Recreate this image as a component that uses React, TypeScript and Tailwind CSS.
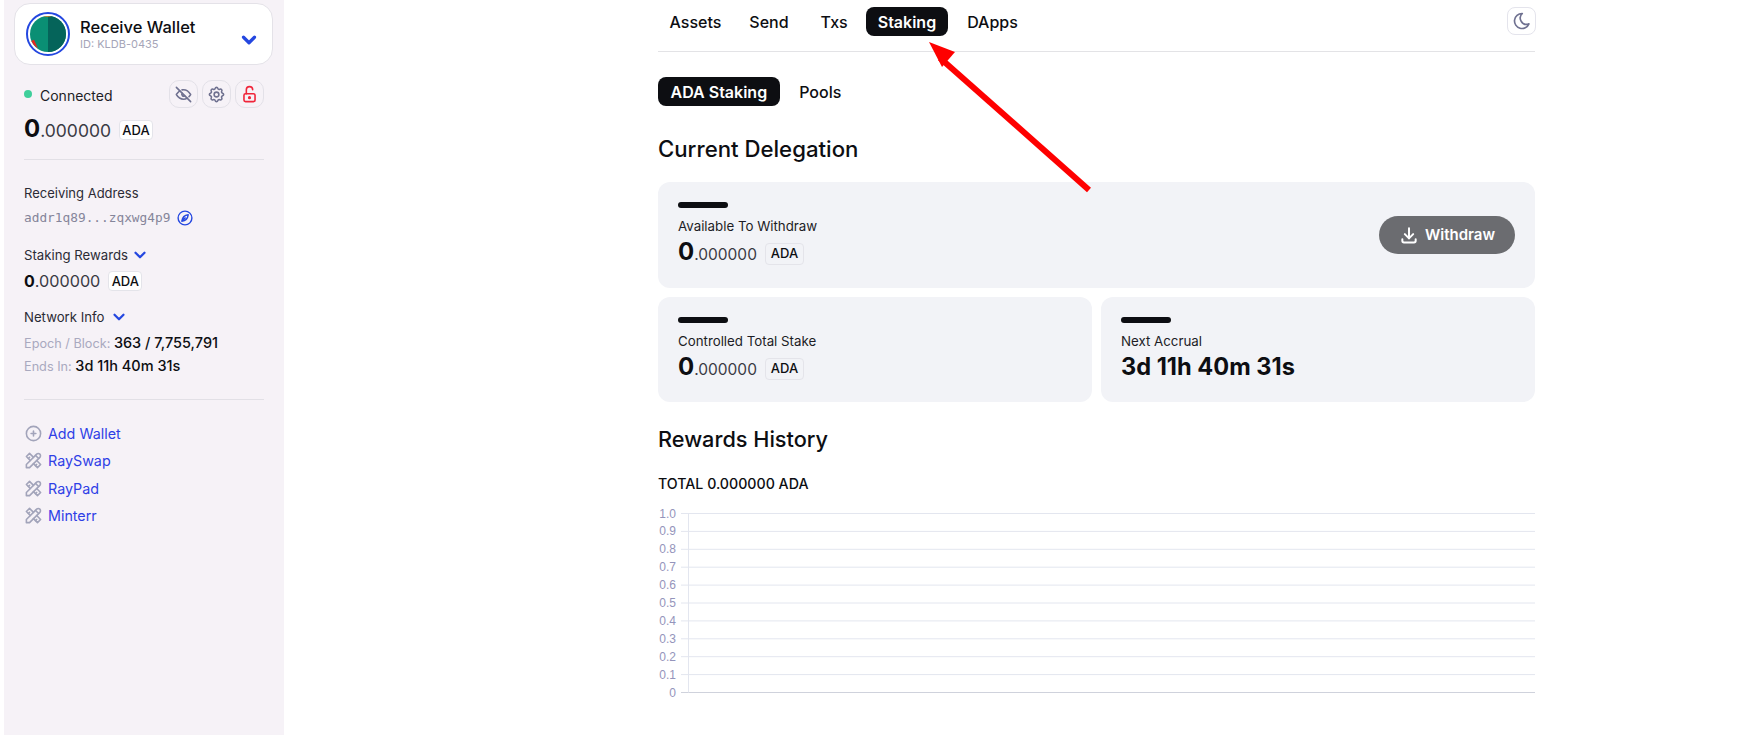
import React from 'react';
import { TbChevronDown, TbCirclePlus, TbDownload, TbEyeOff, TbLockOpen, TbMoon, TbSettings, TbTools } from 'react-icons/tb';

const fontStack = { fontFamily: 'Inter, "Noto Sans", sans-serif' };

const Badge: React.FC<{ muted?: boolean; small?: boolean }> = ({ muted, small }) => (
  <span
    className={`inline-flex items-center justify-center rounded-[4px] border border-[#e4e4ea] text-[13px] font-medium leading-none text-[#0d0e12] ${
      muted ? 'bg-[#f2f3f7]' : 'bg-white'
    } ${small ? 'h-5 w-[34px]' : 'h-[22px] w-[39px]'}`}
  >
    ADA
  </span>
);

const Amount: React.FC<{ big?: boolean; muted?: boolean; large?: boolean }> = ({ big, muted, large }) => (
  <div className="flex items-center gap-[8px]">
    <div className="flex items-baseline text-[#0d0e12]">
      <span className={big ? 'text-[24px] leading-[28px] font-bold' : 'text-[16px] leading-[22px] font-bold'}>0</span>
      <span className={large ? 'text-[17.5px] leading-[28px] text-[#3a3a44]' : big ? 'text-[15.5px] leading-[28px] text-[#3a3a44]' : 'text-[16.2px] leading-[22px] text-[#3a3a44]'}>.000000</span>
    </div>
    <Badge muted={muted} small={!muted} />
  </div>
);

const IconButton: React.FC<{ children: React.ReactNode }> = ({ children }) => (
  <button className="flex h-[28px] w-[29px] items-center justify-center rounded-[10px] border border-[#e3e1e8] bg-transparent">
    {children}
  </button>
);

const Chevron: React.FC<{ size?: number }> = ({ size = 18 }) => (
  <TbChevronDown size={size} strokeWidth={3} className="text-[#2447e0]" />
);

const links = [
  { label: 'Add Wallet', add: true },
  { label: 'RaySwap' },
  { label: 'RayPad' },
  { label: 'Minterr' },
];

const Sidebar: React.FC = () => (
  <aside className="ml-1 flex h-[735px] w-[280px] shrink-0 flex-col bg-[#f6f2f7] pt-[3px]">
    {/* wallet card */}
    <div className="mx-[10px] flex h-[62px] w-[259px] items-center rounded-[16px] border border-[#e4e2e8] bg-white pl-[11px] pr-[12px]">
      <div className="flex h-[44px] w-[44px] items-center justify-center rounded-full border-[2px] border-[#2447e0] bg-white">
        <svg width="36" height="36" viewBox="0 0 36 36">
          <circle cx="18" cy="18" r="18" fill="#0a8f74" />
          <path d="M18 0a18 18 0 0 1 0 36z" fill="#05645a" />
          <path d="M1.2 25 4 23.8 8 32.5A18 18 0 0 1 1.2 25z" fill="#e5281f" />
          <path d="M13 .7a18 18 0 0 1 9 0z" fill="#e8811a" />
        </svg>
      </div>
      <div className="ml-[10px] flex-1">
        <div className="text-[16.5px] leading-[20px] font-medium text-[#0d0e12]">Receive Wallet</div>
        <div className="text-[11px] leading-[14px] text-[#a5a5b8]">ID: KLDB-0435</div>
      </div>
      <div className="pt-[11px]">
        <TbChevronDown size={22} strokeWidth={3.5} className="text-[#2447e0]" />
      </div>
    </div>

    <div className="mx-5 flex h-[95px] flex-col border-b border-[#e2e0e6] pt-[15px]">
      <div className="flex h-[28px] items-center">
        <span className="h-2 w-2 rounded-full bg-[#3fcf9b]" />
        <span className="ml-2 flex-1 pt-[2px] text-[14px] text-[#1d1d26]">Connected</span>
        <div className="flex gap-1">
          <IconButton><TbEyeOff size={19} className="text-[#6f7190]" /></IconButton>
          <IconButton><TbSettings size={19} className="text-[#6f7190]" /></IconButton>
          <IconButton><TbLockOpen size={19} className="text-[#f0253a]" /></IconButton>
        </div>
      </div>
      <div className="mt-[7px]">
        <Amount big large />
      </div>
    </div>

    <div className="mx-5 flex h-[240px] flex-col border-b border-[#e2e0e6] pt-[23px]">
      <div className="text-[13px] leading-[20px] text-[#2b2b35]">Receiving Address</div>
      <div className="mt-[5px] flex items-center gap-[7px]">
        <span className="text-[12.8px] leading-[20px] text-[#85859a]" style={{ fontFamily: '"DejaVu Sans Mono", monospace' }}>addr1q89...zqxwg4p9</span>
        <svg width="16" height="16" viewBox="0 0 16 16" fill="none" stroke="#2447e0" strokeWidth="1.4">
          <circle cx="8" cy="8" r="6.9" />
          <path d="M11.2 4.8c-3.3.4-5.7 1.6-6.4 6.4 3.6-.4 5.9-2.3 6.4-6.4zM6.2 9.8 8.6 7.4" strokeLinejoin="round" />
        </svg>
      </div>
      <div className="mt-[17px] flex items-center gap-[3px] text-[13.2px] leading-[20px] text-[#2b2b35]">
        Staking Rewards <Chevron size={18} />
      </div>
      <div className="mt-[5px]">
        <Amount />
      </div>
      <div className="mt-[15px] flex items-center gap-[6px] text-[13.2px] leading-[20px] text-[#2b2b35]">
        Network Info <Chevron size={18} />
      </div>
      <div className="mt-[5px] text-[12.7px] leading-[22px] text-[#a9a9bf]">
        Epoch / Block: <span className="text-[14.5px] font-medium text-[#0d0e12]">363 / 7,755,791</span>
      </div>
      <div className="text-[12.7px] leading-[22px] text-[#a9a9bf]">
        Ends In: <span className="text-[14.5px] font-medium text-[#0d0e12]">3d 11h 40m 31s</span>
      </div>
    </div>

    <div className="mx-5 mt-[20px] flex flex-col">
      {links.map((l) => (
        <div key={l.label} className="flex h-[27.3px] items-center gap-[5px]">
          {l.add ? <TbCirclePlus size={19} className="text-[#a2a4ba]" /> : <TbTools size={19} className="text-[#a2a4ba]" />}
          <span className="text-[14.3px] text-[#2f3fe6]">{l.label}</span>
        </div>
      ))}
    </div>
  </aside>
);

const Card: React.FC<{ label: string; className?: string; children: React.ReactNode }> = ({ label, className, children }) => (
  <div className={`rounded-[12px] bg-[#f2f3f7] px-5 pt-5 ${className ?? ''}`}>
    <div className="h-[6px] w-[50px] rounded-full bg-[#0d0e12]" />
    <div className="mt-[8px] text-[13.3px] leading-[20px] text-[#1d1d26]">{label}</div>
    <div className="mt-[2px]">{children}</div>
  </div>
);

const RewardsChart: React.FC = () => {
  const ticks = ['1.0', '0.9', '0.8', '0.7', '0.6', '0.5', '0.4', '0.3', '0.2', '0.1', '0'];
  return (
    <svg width="877" height="200" viewBox="0 0 877 200" className="mt-[11px] block">
      {ticks.map((t, i) => {
        const y = 8.5 + i * 17.9;
        return (
          <g key={t}>
            <line x1="23" x2="877" y1={y} y2={y} stroke={i === 10 ? '#cfd2dc' : '#e3e6ef'} strokeWidth="1" />
            <text x="18" y={y + 4} textAnchor="end" fontSize="12" fill="#9494bb" fontFamily='"Liberation Sans", sans-serif'>{t}</text>
          </g>
        );
      })}
      <line x1="30.5" x2="30.5" y1="8.5" y2="187.5" stroke="#e3e6ef" />
    </svg>
  );
};

const tabs = [
  { label: 'Assets', mr: 'mr-[5px]' },
  { label: 'Send', mr: 'mr-[9px]' },
  { label: 'Txs', mr: 'mr-[7px]' },
  { label: 'Staking', mr: 'mr-[8px]' },
  { label: 'DApps', mr: 'mr-0' },
];

const App: React.FC = () => {
  return (
    <div className="relative flex h-[735px] overflow-hidden bg-white" style={fontStack}>
      <Sidebar />
      <main className="ml-[374px] w-[877px] shrink-0">
        {/* top tabs */}
        <div className="flex h-[52px] items-start border-b border-[#e3e3e6] pt-[7px]">
          {tabs.map((t) => (
            <span
              key={t.label}
              className={`flex h-[29px] items-center rounded-[8px] px-[11.5px] text-[16px] ${t.mr} ${
                t.label === 'Staking' ? 'bg-[#0d0e12] font-semibold text-white' : 'font-medium text-[#0d0e12]'
              }`}
            >
              {t.label}
            </span>
          ))}
          <button className="ml-auto mr-[-1px] flex h-[28px] w-[29px] items-center justify-center rounded-[8px] border border-[#e4e4ec]">
            <TbMoon size={20} className="text-[#6f7190]" />
          </button>
        </div>

        {/* sub tabs */}
        <div className="mt-[25px] flex gap-[8px]">
          <span className="flex h-[29px] items-center rounded-[8px] bg-[#0d0e12] px-[12.5px] text-[16px] font-semibold text-white">ADA Staking</span>
          <span className="flex h-[29px] items-center px-[11.5px] text-[16px] font-medium text-[#0d0e12]">Pools</span>
        </div>

        <h2 className="mt-[27px] text-[22.2px] leading-[32px] font-medium text-[#0d0e12]">Current Delegation</h2>

        <div className="mt-[17px] flex flex-col gap-[9px]">
          <div className="relative">
            <Card label="Available To Withdraw" className="h-[106px]">
              <Amount big muted />
            </Card>
            <button className="absolute right-5 top-[34px] flex h-[38px] w-[136px] items-center justify-center gap-[6px] rounded-full bg-[#6b6c70] text-[15px] font-semibold text-white">
              <TbDownload size={20} strokeWidth={2.4} /> Withdraw
            </button>
          </div>
          <div className="grid grid-cols-2 gap-[9px]">
            <Card label="Controlled Total Stake" className="h-[105px]">
              <Amount big muted />
            </Card>
            <Card label="Next Accrual" className="h-[105px]">
              <div className="text-[23.6px] leading-[28px] font-bold text-[#0d0e12]">3d 11h 40m 31s</div>
            </Card>
          </div>
        </div>

        <h2 className="mt-[21px] text-[21.7px] leading-[32px] font-medium text-[#0d0e12]">Rewards History</h2>
        <div className="mt-[19px] text-[14.2px] leading-[20px] font-medium text-[#0d0e12]">TOTAL 0.000000 ADA</div>
        <RewardsChart />
      </main>

      {/* red annotation arrow */}
      <svg className="pointer-events-none absolute left-0 top-0" width="1755" height="735" viewBox="0 0 1755 735">
        <line x1="1089" y1="190" x2="940" y2="58" stroke="#fe0000" strokeWidth="6" />
        <polygon points="929,42 955,52 942,67" fill="#fe0000" />
      </svg>
    </div>
  );
};

export default App;
